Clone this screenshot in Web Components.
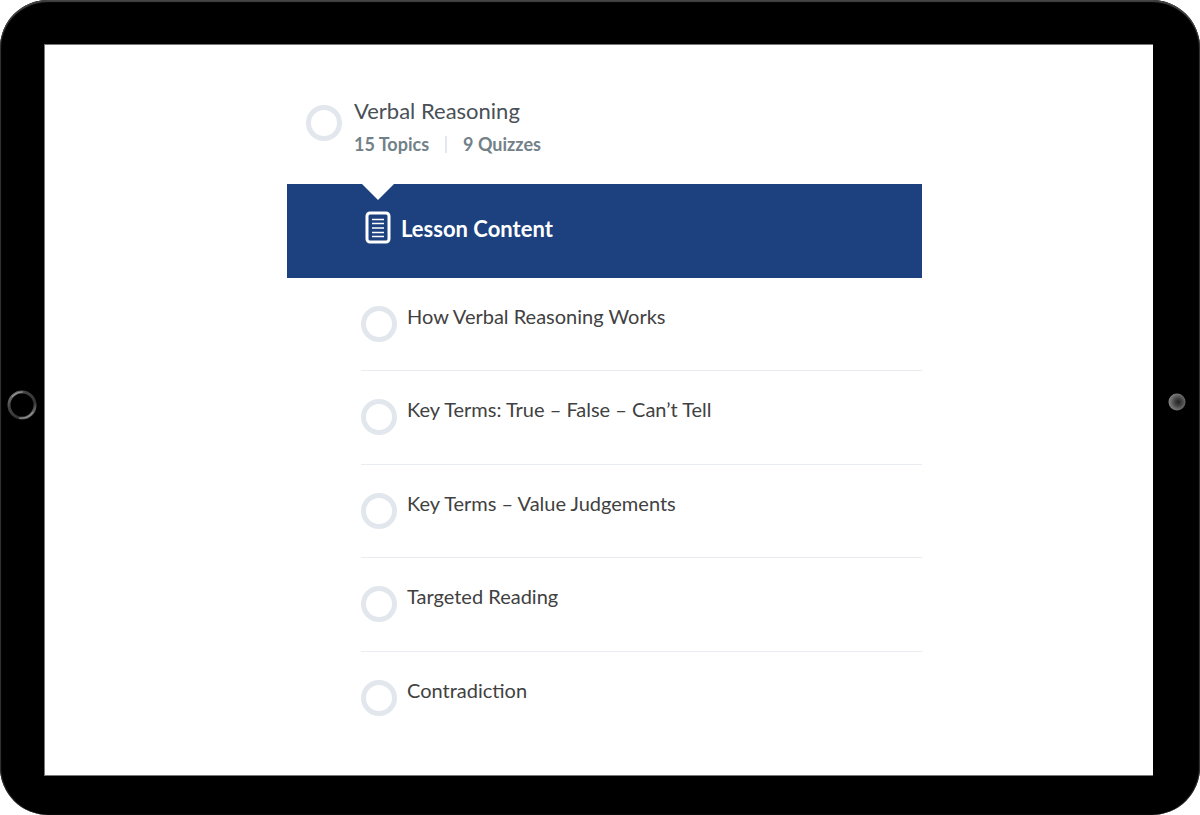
<!DOCTYPE html>
<html lang="en">
<head>
<meta charset="utf-8">
<title>Verbal Reasoning</title>
<style>
  body { margin: 0; background: #fff; font-family: Lato, "Open Sans", sans-serif; }
</style>
</head>
<body>
<tablet-frame>
  <course-lesson>
    <lesson-header slot="header" href="#lesson">
      Verbal Reasoning
      <span slot="topics">15 Topics</span>
      <span slot="quizzes">9 Quizzes</span>
    </lesson-header>
    <content-banner slot="banner">Lesson Content</content-banner>
    <topic-row href="#how">How Verbal Reasoning Works</topic-row>
    <topic-row href="#terms">Key Terms: True – False – Can’t Tell</topic-row>
    <topic-row href="#value">Key Terms – Value Judgements</topic-row>
    <topic-row href="#reading">Targeted Reading</topic-row>
    <topic-row href="#contradiction">Contradiction</topic-row>
  </course-lesson>
</tablet-frame>

<script>
const define = (name, html) => {
  const template = document.createElement('template');
  template.innerHTML = html;
  customElements.define(name, class extends HTMLElement {
    connectedCallback() {
      if (this.shadowRoot) return;
      const root = this.attachShadow({ mode: 'open' });
      root.append(template.content.cloneNode(true));
      const link = root.querySelector('a');
      if (link) link.href = this.getAttribute('href') || '#';
    }
  });
};

define('tablet-frame', `
  <style>
    :host {
      box-sizing: border-box; min-height: 100vh;
      display: grid; grid-template-columns: 44px 1fr 47px;
      padding: 44px 0 39px;
      background: #000; border-radius: 48px;
      box-shadow: inset 0 2px 1px #444, inset 1px 0 1px #333, inset -1px 0 1px #333;
    }
    .side { display: flex; align-items: center; justify-content: center; padding-bottom: 8px; }
    .screen { display: grid; background: #fff; border: 1px solid #777; border-right: 0; }
    svg { display: block; }
  </style>
  <div class="side">
    <svg width="32" height="32" viewBox="0 0 32 32" fill="none" aria-hidden="true">
      <defs><linearGradient id="rim" x1="0" y1="0" x2="1" y2="1">
        <stop offset="0" stop-color="#888"/><stop offset=".3" stop-color="#444"/>
        <stop offset=".7" stop-color="#333"/><stop offset="1" stop-color="#999"/>
      </linearGradient></defs>
      <circle cx="16" cy="15" r="13" stroke="url(#rim)" stroke-width="3"/>
      <path d="M6 7Q10 2 17 2M13 28Q22 29 27 22" stroke="#999" stroke-width="1.2"/>
    </svg>
  </div>
  <div class="screen"><slot></slot></div>
  <div class="side">
    <svg width="20" height="26" viewBox="0 0 20 26" aria-hidden="true">
      <defs><radialGradient id="lens" cx=".58" cy=".5" r=".58">
        <stop offset="0" stop-color="#222"/><stop offset=".4" stop-color="#444"/>
        <stop offset="1" stop-color="#888"/>
      </radialGradient></defs>
      <circle cx="10" cy="9" r="8.5" fill="url(#lens)"/>
    </svg>
  </div>`);

define('course-lesson', `
  <style>
    :host { display: grid; grid-template-columns: 242fr 635fr 231fr; }
    article { grid-column: 2; display: flex; flex-direction: column; padding: 48px 0 30px; }
    .topics {
      flex: 1; display: grid; grid-auto-rows: 1fr; padding-left: 74px;
    }
  </style>
  <article>
    <slot name="header"></slot>
    <slot name="banner"></slot>
    <div class="topics"><slot></slot></div>
  </article>`);

define('status-ring', `
  <style>
    :host {
      display: block; box-sizing: border-box; flex: none;
      width: 36px; height: 36px; border: 5px solid #e2e7ed; border-radius: 50%;
    }
  </style>`);

define('lesson-header', `
  <style>
    :host { display: block; }
    a {
      display: flex; gap: 12px; padding: 0 0 24px 19px;
      color: #495057; text-decoration: none;
    }
    status-ring { margin-top: 12px; }
    .title { display: block; font-size: 22px; line-height: 35px; }
    .meta {
      display: flex; align-items: center; font-size: 18px; font-weight: 700;
      line-height: 32px; color: #728188;
    }
    .rule { width: 2px; height: 17px; margin: 0 16px; background: #e2e7ed; }
  </style>
  <a>
    <status-ring></status-ring>
    <span>
      <span class="title"><slot></slot></span>
      <span class="meta"><slot name="topics"></slot><span class="rule"></span><slot name="quizzes"></slot></span>
    </span>
  </a>`);

define('content-banner', `
  <style>
    :host { display: block; position: relative; background: #1c417e; color: #fff; }
    :host::before {
      content: ""; position: absolute; top: 0; left: 75px;
      border: 16px solid transparent; border-top-color: #fff; border-bottom: 0;
    }
    h2 {
      display: flex; align-items: center; gap: 10px; margin: 0;
      padding: 26px 0 30px 78px; font-size: 22px; line-height: 38px;
    }
    svg { display: block; flex: none; }
  </style>
  <h2>
    <svg width="26" height="36" viewBox="0 0 26 36" fill="none" stroke="#fff" aria-hidden="true">
      <rect x="2" y="2" width="22" height="29" rx="3" stroke-width="3"/>
      <path d="M7 8.5h12M7 12.5h12M7 17h12M7 21.5h12M7 25.5h12" stroke-width="1.5"/>
    </svg>
    <slot></slot>
  </h2>`);

define('topic-row', `
  <style>
    :host { display: block; border-bottom: 1px solid #e9edf1; }
    :host(:last-of-type) { border-bottom-color: transparent; }
    a {
      display: flex; gap: 10px; padding-top: 28px;
      color: #414141; font-size: 20px; line-height: 20px; text-decoration: none;
    }
  </style>
  <a><status-ring></status-ring><span><slot></slot></span></a>`);
</script>
</body>
</html>
